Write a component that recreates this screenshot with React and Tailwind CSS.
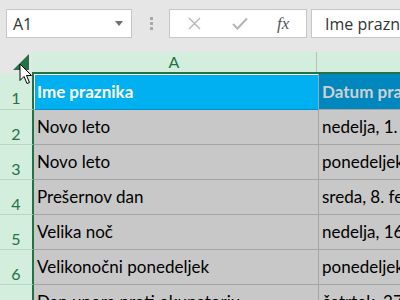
import React from "react";

const rows = [
    ["Novo leto", "nedelja, 1. januar 2017"],
    ["Novo leto", "ponedeljek, 2. januar 2017"],
    ["Prešernov dan", "sreda, 8. februar 2017"],
    ["Velika noč", "nedelja, 16. april 2017"],
    ["Velikonočni ponedeljek", "ponedeljek, 17. april 2017"],
    ["Dan upora proti okupatorju", "četrtek, 27. april 2017"],
];

const cellFont = { fontFamily: "Lato, 'Liberation Sans', sans-serif" };

export default function App() {
    return (
        <div className="relative w-[400px] h-[300px] overflow-hidden bg-[#e6e6e6]">
            {/* Formula bar */}
            <div className="h-[52px] flex items-start pt-[9px]" style={{ fontFamily: "'Open Sans', 'Noto Sans', sans-serif" }}>
                <div className="ml-[6px] w-[126px] h-[29px] bg-white border border-[#c6c6c6] flex items-center justify-between pl-[6px] pr-[8px]">
                    <span className="text-[16px] text-[#333]">A1</span>
                    <svg width="8" height="5" viewBox="0 0 8 5"><path d="M0 0 H8 L4 5 Z" fill="#707070" /></svg>
                </div>
                <div className="ml-[18px] mt-[8px] flex flex-col gap-[2px]">
                    <div className="w-[3px] h-[3px] bg-[#a8a8a8]"></div>
                    <div className="w-[3px] h-[3px] bg-[#a8a8a8]"></div>
                    <div className="w-[3px] h-[3px] bg-[#a8a8a8]"></div>
                </div>
                <div className="ml-[16px] w-[138px] h-[29px] bg-white border border-[#c6c6c6] flex items-center">
                    <svg className="ml-[18px]" width="13" height="13" viewBox="0 0 13 13">
                        <path d="M1 1 L12 12 M12 1 L1 12" stroke="#b4b4b4" strokeWidth="1.4" />
                    </svg>
                    <svg className="ml-[31px]" width="16" height="13" viewBox="0 0 16 13">
                        <path d="M1 7 L5.5 11.5 L15 1.5" stroke="#b4b4b4" strokeWidth="2" fill="none" />
                    </svg>
                    <span className="ml-[29px] text-[17px] italic text-[#555]" style={{ fontFamily: "'Liberation Serif', serif" }}>fx</span>
                </div>
                <div className="ml-[4px] flex-1 h-[29px] bg-white border border-[#c6c6c6] border-r-0 flex items-center pl-[13px] overflow-hidden whitespace-nowrap">
                    <span className="text-[16px] text-[#333]">Ime praznika</span>
                </div>
            </div>

            {/* Column header row */}
            <div className="flex h-[22px]">
                <div className="w-[32px] h-[20px] bg-[#e6e6e6] flex items-end justify-end pr-[2px] pb-[1px]">
                    <svg width="17" height="17" viewBox="0 0 17 17"><path d="M16 0 V16 H0 Z" fill="#217346" /></svg>
                </div>
                <div className="flex-1 flex bg-[#d3eedd] border-b-2 border-[#217346]" style={cellFont}>
                    <div className="w-[285px] border-r border-[#bcbcbc] flex items-center justify-center text-[16px] text-[#217346]">A</div>
                    <div className="flex-1"></div>
                </div>
            </div>

            {/* Header row 1 */}
            <div className="flex h-[36px]" style={cellFont}>
                <div className="w-[34px] border-r-2 border-[#217346] bg-[#d3eedd] border-b border-b-[#b9d6c4] flex justify-center pt-[16px] text-[16px] leading-none text-[#217346]">1</div>
                <div className="w-[284px] bg-[#00b0f0] border-t border-l border-white border-b border-b-[#0090c8] flex items-center pl-[2px] text-[17px] font-bold text-white whitespace-nowrap">Ime praznika</div>
                <div className="flex-1 bg-[#0087bd] border-l border-[#a5a5a5] border-b border-b-[#a5a5a5] flex items-center pl-[3px] text-[17px] font-bold text-[#d0d0d0] whitespace-nowrap overflow-hidden">Datum praznika</div>
            </div>

            {rows.map((row, index) => (
                <div key={index} className="flex h-[35px]" style={cellFont}>
                    <div className="w-[34px] border-r-2 border-[#217346] bg-[#d3eedd] border-b border-b-[#b9d6c4] flex justify-center pt-[16px] text-[16px] leading-none text-[#217346]">{index + 2}</div>
                    <div className="w-[284px] bg-[#c8c8c8] border-b border-[#a5a5a5] flex items-center pl-[3px] text-[17px] text-black whitespace-nowrap overflow-hidden">{row[0]}</div>
                    <div className="flex-1 bg-[#c8c8c8] border-l border-b border-[#a5a5a5] flex items-center pl-[3px] text-[17px] text-black whitespace-nowrap overflow-hidden">{row[1]}</div>
                </div>
            ))}

            {/* Mouse pointer */}
            <svg className="absolute left-[19px] top-[63px]" width="15" height="22" viewBox="0 0 15 22">
                <path d="M1 1 L1 17.5 L5 13.5 L8 20.5 L10.5 19.5 L7.5 12.5 L12.5 12.5 Z" fill="white" stroke="black" strokeWidth="1" strokeLinejoin="round" />
            </svg>
        </div>
    );
}
